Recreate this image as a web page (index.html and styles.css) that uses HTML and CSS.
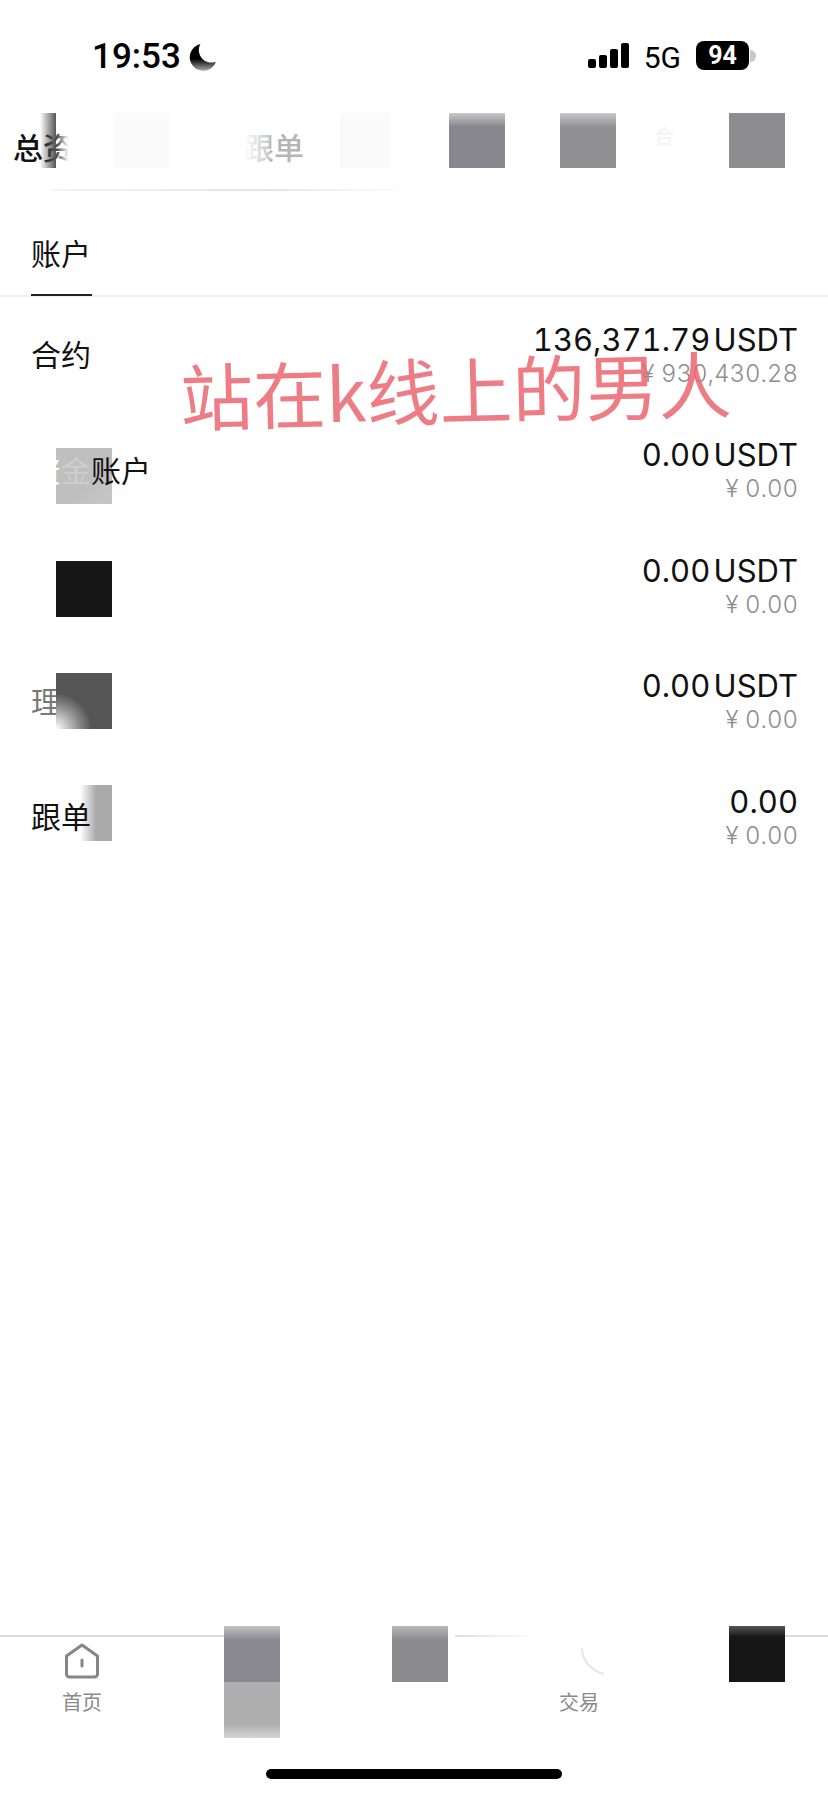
FILE: index.html
```html
<!DOCTYPE html>
<html lang="zh">
<head>
    <meta charset="UTF-8">
    <meta name="viewport" content="width=device-width, initial-scale=1.0">
    <title>账户</title>
    <link rel="stylesheet" href="styles.css">
</head>
<body>
    <div class="page">
        <div class="status">
            <div class="status-left">
                <span class="time">19:53</span>
                <svg class="moon" viewBox="0 0 27 27">
                    <defs>
                        <linearGradient id="moonfade" x1="0" y1="0" x2="0" y2="1">
                            <stop offset="0.55" stop-color="#000"/>
                            <stop offset="1" stop-color="#aaa"/>
                        </linearGradient>
                    </defs>
                    <path d="M11 1A13 13 0 1 0 26 18A12 12 0 0 1 11 1Z" fill="url(#moonfade)"/>
                </svg>
            </div>
            <div class="status-right">
                <div class="signal">
                    <span class="bar-1"></span>
                    <span class="bar-2"></span>
                    <span class="bar-3"></span>
                    <span class="bar-4"></span>
                </div>
                <span class="net">5G</span>
                <div class="battery">94</div>
                <div class="battery-nub"></div>
            </div>
        </div>

        <nav class="topnav">
            <span class="topnav-item first">总资</span>
            <span class="topnav-item copy">跟单</span>
            <span class="topnav-item ghost">合</span>
            <div class="smear"></div>
            <div class="erase erase-first"></div>
            <div class="erase erase-copy"></div>
            <div class="block faint block-a"></div>
            <div class="block faint block-b"></div>
            <div class="block gray block-c"></div>
            <div class="block gray block-d"></div>
            <div class="block gray block-e"></div>
            <div class="topnav-line"></div>
        </nav>

        <div class="tabs">
            <div class="tab">账户</div>
        </div>

        <section class="accounts">
            <div class="row">
                <div class="name">合约</div>
                <div class="money">
                    <div class="amount">136,371.79 USDT</div>
                    <div class="cny">¥ 930,430.28</div>
                </div>
                <div class="watermark">站在k线上的男人</div>
            </div>
            <div class="row">
                <div class="patch patch-light"></div>
                <div class="name"><span class="name-white">资</span><span class="name-trace">金</span>账户</div>
                <div class="money">
                    <div class="amount">0.00 USDT</div>
                    <div class="cny">¥ 0.00</div>
                </div>
            </div>
            <div class="row">
                <div class="money">
                    <div class="amount">0.00 USDT</div>
                    <div class="cny">¥ 0.00</div>
                </div>
                <div class="patch patch-black"></div>
            </div>
            <div class="row">
                <div class="name name-faded">理财</div>
                <div class="money">
                    <div class="amount">0.00 USDT</div>
                    <div class="cny">¥ 0.00</div>
                </div>
                <div class="patch patch-dark"></div>
            </div>
            <div class="row">
                <div class="patch patch-side"></div>
                <div class="name">跟单</div>
                <div class="money">
                    <div class="amount">0.00</div>
                    <div class="cny">¥ 0.00</div>
                </div>
            </div>
        </section>

        <footer class="bottom">
            <div class="bottom-line"></div>
            <div class="bottom-item home">
                <svg class="home-icon" viewBox="0 0 36 36">
                    <path d="M18 2L33.5 13V31A3 3 0 0 1 30.500 34H5.500A3 3 0 0 1 2.500 31V13Z" fill="none" stroke="#858585" stroke-width="3" stroke-linejoin="round"/>
                    <path d="M18 17V23" stroke="#858585" stroke-width="3" stroke-linecap="round"/>
                </svg>
                <span>首页</span>
            </div>
            <div class="bottom-item trade">
                <svg class="trade-arc" viewBox="0 0 26 30">
                    <path d="M2 2C2 14 10 24 24 28" fill="none" stroke="#e6e6e6" stroke-width="2"/>
                </svg>
                <span>交易</span>
            </div>
            <div class="bottom-block nav-a"></div>
            <div class="bottom-block nav-b"></div>
            <div class="bottom-block nav-c"></div>
            <div class="bottom-block nav-d"></div>
            <div class="home-bar"></div>
        </footer>
    </div>
</body>
</html>
```

FILE: styles.css
```css
*, *:before, *:after{
    margin: 0;
    padding: 0;
    box-sizing: border-box;
}
body{
    background: #fff;
    color: #111;
    font-family: "Inter", "Noto Sans CJK SC", sans-serif;
}
.page{
    width: 828px;
    height: 1795px;
    display: flex;
    flex-direction: column;
    overflow: hidden;
}

/* status bar */
.status{
    height: 113px;
    flex-shrink: 0;
    display: flex;
    justify-content: space-between;
    padding: 40px 72px 0 92px;
}
.status-left{
    display: flex;
    align-items: flex-start;
    gap: 8px;
}
.time{
    font-family: "Roboto", sans-serif;
    font-size: 35px;
    font-weight: 500;
    line-height: 33px;
    color: #000;
}
.moon{
    width: 28px;
    height: 28px;
    margin-top: 3px;
}
.status-right{
    display: flex;
    align-items: flex-start;
}
.signal{
    display: flex;
    align-items: flex-end;
    gap: 3px;
    height: 25px;
    margin-top: 3px;
}
.signal span{
    width: 8px;
    background: #000;
    border-radius: 2px;
}
.bar-1{ height: 9px; }
.bar-2{ height: 13px; }
.bar-3{ height: 19px; }
.bar-4{ height: 25px; }
.net{
    font-family: "Roboto", sans-serif;
    font-size: 30px;
    line-height: 30px;
    color: #000;
    margin: 3px 0 0 15px;
}
.battery{
    width: 53px;
    height: 29px;
    margin: 1px 0 0 15px;
    background: #000;
    color: #fff;
    border-radius: 8px;
    font-family: "Roboto", sans-serif;
    font-size: 25px;
    font-weight: 700;
    line-height: 29px;
    text-align: center;
}
.battery-nub{
    width: 6px;
    height: 12px;
    margin: 10px 0 0 1px;
    background: #c8c8c8;
    border-radius: 0 6px 6px 0;
}

/* top nav */
.topnav{
    position: relative;
    height: 77px;
    flex-shrink: 0;
    padding: 11px 0 0 13px;
    display: flex;
    font-family: "Noto Sans CJK SC", sans-serif;
    font-size: 30px;
    font-weight: 500;
    line-height: 44px;
}
.topnav-item.first{
    width: 60px;
}
.topnav-item.copy{
    margin-left: 171px;
    color: #b5b5b5;
}
.topnav-item.ghost{
    margin: -10px 0 0 350px;
    font-size: 20px;
    color: #f3f3f3;
}
.smear{
    position: absolute;
    left: 40px;
    top: 0;
    width: 16px;
    height: 55px;
    background: linear-gradient(90deg, rgba(90, 90, 90, 0), #555);
}
.erase{
    position: absolute;
    top: 0;
    height: 55px;
}
.erase-first{
    left: 56px;
    width: 18px;
    background: linear-gradient(90deg, rgba(255, 255, 255, 0.2), #fff 70%);
}
.erase-copy{
    left: 240px;
    width: 30px;
    background: linear-gradient(90deg, #fff 15%, rgba(255, 255, 255, 0.2));
}
.block{
    position: absolute;
    top: 0;
    width: 56px;
    height: 55px;
}
.faint{
    background: #fafafa;
}
.gray{
    background: linear-gradient(180deg, #c9c9cc, #87878d 25%);
}
.block-a{ left: 113px; }
.block-b{ left: 340px; width: 50px; }
.block-c{ left: 449px; }
.block-d{ left: 560px; background: linear-gradient(180deg, #c9c9cc, #909095 25%); }
.block-e{ left: 729px; background: #8d8d90; }
.topnav-line{
    position: absolute;
    left: 52px;
    top: 76px;
    width: 360px;
    height: 2px;
    background: linear-gradient(90deg, #f4f4f4, #e4e4e4 60%, #fff);
}

/* tab */
.tabs{
    height: 107px;
    flex-shrink: 0;
    border-bottom: 2px solid #eee;
    padding: 0 31px;
    display: flex;
    align-items: flex-end;
}
.tab{
    font-family: "Noto Sans CJK SC", sans-serif;
    font-size: 30px;
    line-height: 44px;
    height: 105px;
    width: 61px;
    padding-top: 39px;
    border-bottom: 2px solid #222;
    margin-bottom: -1px;
}

/* account rows */
.accounts{
    flex: 1;
}
.row{
    position: relative;
    height: 115.5px;
    padding: 0 30px 0 31px;
    display: flex;
    align-items: center;
    justify-content: space-between;
}
.name{
    position: relative;
    font-family: "Noto Sans CJK SC", sans-serif;
    font-size: 30px;
    line-height: 44px;
    margin-top: -3px;
}
.name-white{
    color: #fff;
}
.name-trace{
    color: #cdcdcd;
}
.name-faded{
    color: #777;
}
.money{
    margin-left: auto;
    text-align: right;
}
.amount{
    font-size: 31px;
    line-height: 36px;
    color: #111;
    font-variant-numeric: tabular-nums;
    word-spacing: -5px;
}
.cny{
    font-size: 24px;
    font-weight: 300;
    line-height: 28px;
    margin-top: 2px;
    color: #8e8e8e;
    font-variant-numeric: tabular-nums;
}
.watermark{
    position: absolute;
    left: 180px;
    top: 40px;
    font-family: "Noto Sans CJK SC", sans-serif;
    font-size: 73px;
    line-height: 100px;
    white-space: nowrap;
    color: rgba(235, 105, 115, 0.87);
    transform: rotate(-1.4deg);
}
.patch{
    position: absolute;
    left: 56px;
    width: 56px;
    height: 56px;
}
.patch-light{
    top: 35.5px;
    background: linear-gradient(135deg, #bfbfbf 60%, #c6c6c6);
}
.patch-black{
    top: 33px;
    background: #161616;
}
.patch-dark{
    top: 29.5px;
    background: radial-gradient(circle at 0 100%, #fff, #888 30%, #555 45%);
}
.patch-side{
    top: 26px;
    left: 80px;
    width: 32px;
    background: linear-gradient(90deg, rgba(170, 170, 170, 0), #aaa 50%);
}

/* bottom nav */
.bottom{
    position: relative;
    height: 169px;
    flex-shrink: 0;
    padding-top: 18px;
    font-family: "Noto Sans CJK SC", sans-serif;
    font-size: 20px;
    line-height: 28px;
    color: #8a8a8a;
}
.bottom-line{
    position: absolute;
    left: 0;
    right: 0;
    top: 9px;
    height: 2px;
    background: linear-gradient(90deg, #ddd 27%, #fff 27%, #fff 55%, #ddd 55%, #fff 65%, #fff 94%, #ddd 94%);
}
.bottom-item{
    position: absolute;
    top: 17px;
    display: flex;
    flex-direction: column;
    align-items: center;
}
.bottom-item span{
    margin-top: 9px;
}
.home{
    left: 62px;
    width: 40px;
}
.home-icon{
    width: 36px;
    height: 36px;
}
.trade{
    left: 559px;
    width: 40px;
}
.trade-arc{
    width: 26px;
    height: 36px;
    margin-left: 28px;
}
.bottom-block{
    position: absolute;
    width: 56px;
    height: 56px;
    top: 0;
}
.nav-a{
    left: 224px;
    background: linear-gradient(180deg, #c4c4c6, #88888e 25%);
}
.nav-b{
    left: 224px;
    top: 56px;
    background: linear-gradient(180deg, #aeaeae 75%, #d5d5d5);
}
.nav-c{
    left: 392px;
    background: linear-gradient(180deg, #b8b8b8, #8c8c8e 25%);
}
.nav-d{
    left: 729px;
    background: linear-gradient(180deg, #555, #161616 20%);
}
.home-bar{
    position: absolute;
    left: 266px;
    top: 143px;
    width: 296px;
    height: 10px;
    background: #000;
    border-radius: 5px;
}
```
